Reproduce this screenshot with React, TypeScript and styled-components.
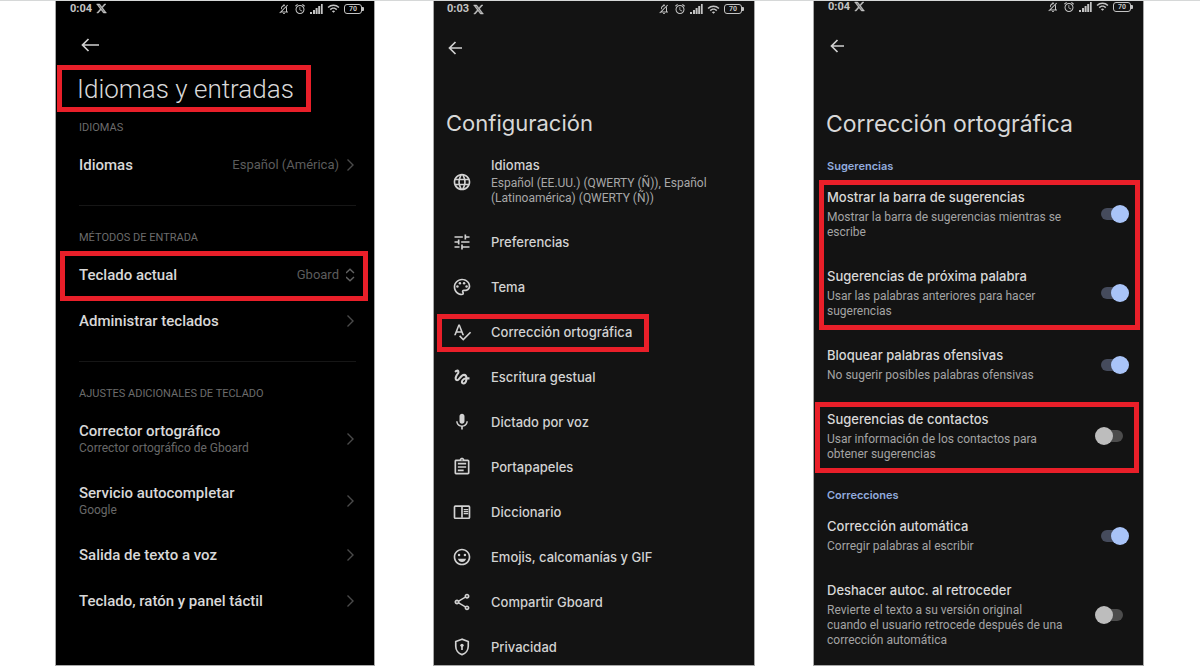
import React from 'react';
import styled, { createGlobalStyle } from 'styled-components';
import {
  MdLanguage,
  MdTune,
  MdOutlinePalette,
  MdSpellcheck,
  MdGesture,
  MdMic,
  MdOutlineAssignment,
  MdOutlineEmojiEmotions,
  MdOutlineShare,
  MdOutlineNotificationsOff,
  MdAlarm,
  MdWifi,
} from 'react-icons/md';
import { FaXTwitter } from 'react-icons/fa6';

const GlobalStyle = createGlobalStyle`
  *, *::before, *::after { box-sizing: border-box; }
  body { margin: 0; background: #fff; }
  h1, h2, p { margin: 0; }
`;

const Page = styled.main`
  display: grid;
  grid-template-columns: 320fr 322fr 331fr;
  gap: 58px;
  min-height: 100vh;
  padding: 0 56px 2px 55px;
  border-top: 1px solid #d6d8d8;
`;

const Phone = styled.section<{ $bg: string; $font: string }>`
  display: flex;
  flex-direction: column;
  min-width: 0;
  background: ${(p) => p.$bg};
  border: 1px solid #a8a8a8;
  border-top: 0;
  font-family: ${(p) => p.$font}, 'Liberation Sans', sans-serif;
  color: #d8d8d8;
`;

const StatusBar = styled.div<{ $height: number; $left: number }>`
  display: flex;
  align-items: center;
  justify-content: space-between;
  height: ${(p) => p.$height}px;
  padding: 0 12px 0 ${(p) => p.$left}px;
  color: #c4c4c4;
`;

const StatusGroup = styled.div`
  display: flex;
  align-items: center;
  gap: 4px;
  font: 700 11px/12px Roboto, sans-serif;
`;

const MutedBell = styled(MdOutlineNotificationsOff)`
  transform: scaleX(-1);
`;

const Battery = styled.span`
  display: flex;
  align-items: center;
  justify-content: center;
  width: 18px;
  height: 10px;
  border: 1px solid #c4c4c4;
  border-radius: 3px;
  font-size: 7px;
  line-height: 8px;
  position: relative;
  &::after {
    content: '';
    position: absolute;
    right: -3px;
    top: 2px;
    width: 2px;
    height: 4px;
    border-radius: 0 1px 1px 0;
    background: #c4c4c4;
  }
`;

const BackButton = styled.button<{ $height: number; $left: number }>`
  display: flex;
  align-items: center;
  align-self: flex-start;
  height: ${(p) => p.$height}px;
  padding: 0 0 0 ${(p) => p.$left}px;
  border: 0;
  background: none;
  color: #d0d0d0;
`;

/* Red frame drawn over the area that the tutorial points at. */
const Marked = styled.div<{ $inset: string }>`
  position: relative;
  &::after {
    content: '';
    position: absolute;
    inset: ${(p) => p.$inset};
    border: 5px solid #e91f29;
    pointer-events: none;
  }
`;

const SystemTitle = styled.h1`
  padding-left: 21px;
  font-size: 26px;
  font-weight: 300;
  line-height: 30px;
`;

const Group = styled.section<{ $first?: boolean }>`
  margin: ${(p) => (p.$first ? 0 : 17)}px 18px 0 23px;
  padding-top: ${(p) => (p.$first ? 16 : 24)}px;
  border-top: ${(p) => (p.$first ? '0' : '1px solid #161616')};
`;

const GroupLabel = styled.h2`
  margin-bottom: 6px;
  font-size: 11px;
  font-weight: 400;
  line-height: 16px;
  color: #6c6c6c;
`;

const rowLook = `
  display: flex;
  align-items: center;
  justify-content: space-between;
  color: inherit;
  text-decoration: none;
`;

const SystemRow = styled.a<{ $tall?: boolean }>`
  ${rowLook}
  height: ${(p) => (p.$tall ? 62 : 46)}px;
`;

const PickerRow = styled.div`
  ${rowLook}
  height: 46px;
`;

const SystemName = styled.span`
  display: block;
  font-size: 15px;
  font-weight: 500;
  line-height: 18px;
`;

const SystemNote = styled.span`
  display: block;
  font-size: 12px;
  line-height: 16px;
  color: #686868;
`;

const Trailing = styled.span`
  display: flex;
  align-items: center;
  gap: 7px;
  font-size: 13px;
  line-height: 16px;
  color: #5c5c5c;
`;

const Picker = styled.select`
  appearance: none;
  padding: 0;
  border: 0;
  background: none;
  font: inherit;
  color: inherit;
  text-align-last: right;
`;

const AppTitle = styled.h1<{ $size: number }>`
  padding: 28px 0 0 12px;
  font-size: ${(p) => p.$size}px;
  font-weight: 400;
  line-height: 32px;
  white-space: nowrap;
`;

const MenuRow = styled.a`
  display: flex;
  align-items: center;
  gap: 19px;
  padding: 12px 18px 13px;
  color: #d2d2d2;
  text-decoration: none;
  font-size: 13px;
  font-weight: 500;
  line-height: 20px;
  > svg { flex: none; width: 20px; height: 20px; }
`;

const Menu = styled.nav`
  display: flex;
  flex-direction: column;
  > ${MenuRow}:last-child { padding-bottom: 8px; }
`;

const LanguageRow = styled(MenuRow)`
  padding: 18px 18px 14px;
`;

const MenuName = styled.span`
  display: block;
  line-height: 16px;
  margin-bottom: 3px;
`;

const MenuNote = styled.span`
  display: block;
  font-family: Roboto, sans-serif;
  font-size: 12px;
  font-weight: 400;
  line-height: 15px;
  color: #a8a8a8;
`;

const Section = styled.section`
  display: flex;
  flex-direction: column;
`;

const SectionLabel = styled.h2<{ $first?: boolean }>`
  padding: ${(p) => (p.$first ? 19 : 13)}px 13px 0;
  font-size: 11px;
  font-weight: 600;
  line-height: 15px;
  color: #92abdd;
`;

const SwitchRow = styled.label`
  display: flex;
  align-items: center;
  justify-content: space-between;
  padding: 14px 14px 13px 13px;
`;

const SwitchText = styled.span`
  display: block;
  max-width: 252px;
`;

const SwitchName = styled.span`
  display: block;
  margin-bottom: 4px;
  font-size: 13px;
  font-weight: 500;
  line-height: 18px;
  white-space: nowrap;
`;

const SwitchNote = styled.span`
  display: block;
  font-family: Roboto, sans-serif;
  font-size: 12px;
  line-height: 15px;
  color: #a4a4a4;
  white-space: pre-line;
`;

const Switch = styled.input`
  appearance: none;
  flex: none;
  position: relative;
  width: 34px;
  height: 18px;
  margin: 0;
  &::before {
    content: '';
    position: absolute;
    inset: 3px 6px;
    border-radius: 6px;
    background: #4c4c4c;
  }
  &::after {
    content: '';
    position: absolute;
    top: 0;
    left: 0;
    width: 18px;
    height: 18px;
    border-radius: 50%;
    background: #bdbdbd;
  }
  &:checked::before { background: #454b5c; }
  &:checked::after { left: 16px; background: #a9c4f8; }
`;

const SignalIcon = () => (
  <svg width="13" height="10" viewBox="0 0 13 10" fill="currentColor" aria-hidden="true">
    <path d="M0 8h2v2H0zM3 6h2v4H3zM5.600 4h2v6h-2zM8.200 2h2v8h-2zM11 0h1.700v10H11z" />
  </svg>
);

const Arrow = ({ width }: { width: number }) => (
  <svg width={width} height="14" viewBox={`0 0 ${width} 14`} fill="none" stroke="currentColor" strokeWidth="1.700" aria-hidden="true">
    <path d={`M1.500 7H${width}M7.500 1 1.500 7l6 6`} />
  </svg>
);

const Chevron = () => (
  <svg width="10" height="14" viewBox="0 0 10 14" fill="none" stroke="#4a4a4a" strokeWidth="1.400" aria-hidden="true">
    <path d="M1.500 1.500L7 7l-5.500 5.500" />
  </svg>
);

const UpDown = () => (
  <svg width="10" height="14" viewBox="0 0 10 14" fill="none" stroke="#626262" strokeWidth="1.400" aria-hidden="true">
    <path d="M0 5l4-3.700L8 5M0 9l4 3.700L8 9" />
  </svg>
);

const DictionaryIcon = () => (
  <svg viewBox="0 0 24 24" fill="none" stroke="currentColor" aria-hidden="true">
    <rect x="3" y="5" width="18" height="14.500" rx="1" strokeWidth="2" />
    <path d="M12 5v14" strokeWidth="2" />
    <path d="M14 9h5.500M14 11.500h5.500M14 14h5.500" strokeWidth="1.500" />
  </svg>
);

const PrivacyIcon = () => (
  <svg viewBox="0 0 24 24" fill="none" stroke="currentColor" strokeWidth="2" aria-hidden="true">
    <path d="M12 2.600 4.500 5.500v5.600c0 4.700 3.200 8.800 7.500 10.100 4.300-1.300 7.500-5.400 7.500-10.100V5.500z" />
    <circle cx="12" cy="10" r="2" fill="currentColor" stroke="none" />
    <path d="M12 10v5.500" />
  </svg>
);

function Status({ time, height, left }: { time: string; height: number; left: number }) {
  return (
    <StatusBar $height={height} $left={left}>
      <StatusGroup>
        {time}
        <FaXTwitter size={11} strokeWidth={24} stroke="currentColor" />
      </StatusGroup>
      <StatusGroup>
        <MutedBell size={12} />
        <MdAlarm size={12} />
        <SignalIcon />
        <MdWifi size={13} />
        <Battery>70</Battery>
      </StatusGroup>
    </StatusBar>
  );
}

function SystemLink({ name, note, value }: { name: string; note?: string; value?: string }) {
  return (
    <SystemRow href="#" $tall={Boolean(note)}>
      <span>
        <SystemName>{name}</SystemName>
        {note && <SystemNote>{note}</SystemNote>}
      </span>
      <Trailing>
        {value}
        <Chevron />
      </Trailing>
    </SystemRow>
  );
}

function Setting({ name, note, on }: { name: string; note: string; on?: boolean }) {
  return (
    <SwitchRow>
      <SwitchText>
        <SwitchName>{name}</SwitchName>
        <SwitchNote>{note}</SwitchNote>
      </SwitchText>
      <Switch type="checkbox" role="switch" defaultChecked={on} />
    </SwitchRow>
  );
}

export default function App() {
  return (
    <>
      <GlobalStyle />
      <Page>
        <Phone $bg="#000" $font="Roboto">
          <Status time="0:04" height={15} left={14} />
          <BackButton $height={58} $left={25} aria-label="Atrás">
            <Arrow width={18} />
          </BackButton>
          <Marked $inset="-9px 63px -8px 1px">
            <SystemTitle>Idiomas y entradas</SystemTitle>
          </Marked>
          <Group $first>
            <GroupLabel>IDIOMAS</GroupLabel>
            <SystemLink name="Idiomas" value="Español (América)" />
          </Group>
          <Group>
            <GroupLabel>MÉTODOS DE ENTRADA</GroupLabel>
            <Marked $inset="-1px -12px -3px -19px">
              <PickerRow>
                <SystemName as="label" htmlFor="keyboard">Teclado actual</SystemName>
                <Trailing>
                  <Picker id="keyboard" defaultValue="Gboard">
                    <option>Gboard</option>
                  </Picker>
                  <UpDown />
                </Trailing>
              </PickerRow>
            </Marked>
            <SystemLink name="Administrar teclados" />
          </Group>
          <Group>
            <GroupLabel>AJUSTES ADICIONALES DE TECLADO</GroupLabel>
            <SystemLink name="Corrector ortográfico" note="Corrector ortográfico de Gboard" />
            <SystemLink name="Servicio autocompletar" note="Google" />
            <SystemLink name="Salida de texto a voz" />
            <SystemLink name="Teclado, ratón y panel táctil" />
          </Group>
        </Phone>

        <Phone $bg="#131313" $font="Inter">
          <Status time="0:03" height={16} left={13} />
          <BackButton $height={62} $left={14} aria-label="Atrás">
            <Arrow width={14} />
          </BackButton>
          <AppTitle $size={22}>Configuración</AppTitle>
          <Menu>
            <LanguageRow href="#">
              <MdLanguage />
              <span>
                <MenuName>Idiomas</MenuName>
                <MenuNote>Español (EE.UU.) (QWERTY (Ñ)), Español (Latinoamérica) (QWERTY (Ñ))</MenuNote>
              </span>
            </LanguageRow>
            <MenuRow href="#"><MdTune />Preferencias</MenuRow>
            <MenuRow href="#"><MdOutlinePalette />Tema</MenuRow>
            <Marked $inset="4px 105px 3px 3px">
              <MenuRow href="#"><MdSpellcheck />Corrección ortográfica</MenuRow>
            </Marked>
            <MenuRow href="#"><MdGesture />Escritura gestual</MenuRow>
            <MenuRow href="#"><MdMic />Dictado por voz</MenuRow>
            <MenuRow href="#"><MdOutlineAssignment />Portapapeles</MenuRow>
            <MenuRow href="#"><DictionaryIcon />Diccionario</MenuRow>
            <MenuRow href="#"><MdOutlineEmojiEmotions />Emojis, calcomanías y GIF</MenuRow>
            <MenuRow href="#"><MdOutlineShare />Compartir Gboard</MenuRow>
            <MenuRow href="#"><PrivacyIcon />Privacidad</MenuRow>
          </Menu>
        </Phone>

        <Phone $bg="#131313" $font="Inter">
          <Status time="0:04" height={11} left={14} />
          <BackButton $height={68} $left={16} aria-label="Atrás">
            <Arrow width={14} />
          </BackButton>
          <AppTitle $size={23}>Corrección ortográfica</AppTitle>
          <Section>
            <SectionLabel $first>Sugerencias</SectionLabel>
            <Marked $inset="6px 3px 2px 5px">
              <Setting name="Mostrar la barra de sugerencias" note={'Mostrar la barra de sugerencias mientras se\nescribe'} on />
              <Setting name="Sugerencias de próxima palabra" note={'Usar las palabras anteriores para hacer\nsugerencias'} on />
            </Marked>
            <Setting name="Bloquear palabras ofensivas" note="No sugerir posibles palabras ofensivas" on />
            <Marked $inset="6px 4px 2px 1px">
              <Setting name="Sugerencias de contactos" note={'Usar información de los contactos para\nobtener sugerencias'} />
            </Marked>
          </Section>
          <Section>
            <SectionLabel>Correcciones</SectionLabel>
            <Setting name="Corrección automática" note="Corregir palabras al escribir" on />
            <Setting
              name="Deshacer autoc. al retroceder"
              note={'Revierte el texto a su versión original\ncuando el usuario retrocede después de una\ncorrección automática'}
            />
          </Section>
        </Phone>
      </Page>
    </>
  );
}
